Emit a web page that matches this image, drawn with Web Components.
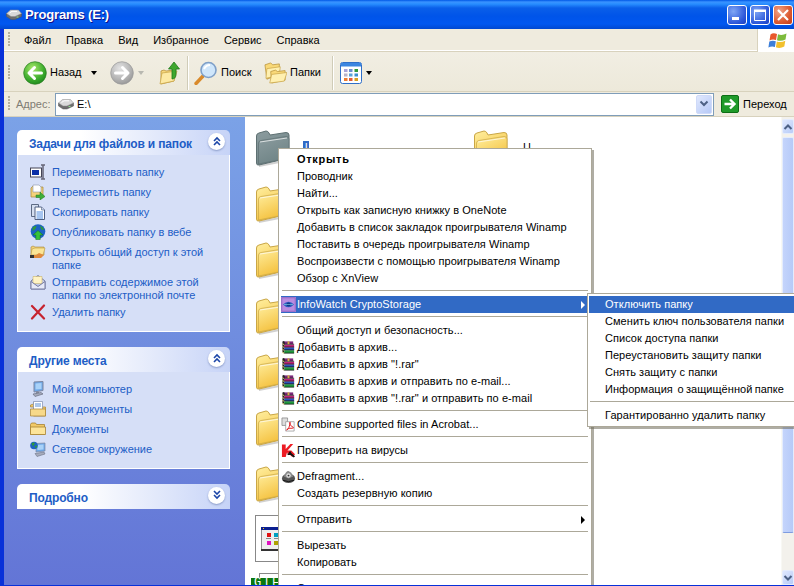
<!DOCTYPE html>
<html lang="ru">
<head>
<meta charset="utf-8">
<title>Programs (E:)</title>
<style>
  html, body { margin: 0; padding: 0; height: 586px; overflow: hidden; background: #fff; }
  body { font-family: "Liberation Sans", "DejaVu Sans", sans-serif; font-size: 11px; color: #000; }
</style>
</head>
<body>
<xp-window>
  <xp-titlebar slot="bars" label="Programs (E:)"></xp-titlebar>
  <xp-menubar slot="bars">
    <span>Файл</span><span>Правка</span><span>Вид</span><span>Избранное</span><span>Сервис</span><span>Справка</span>
  </xp-menubar>
  <xp-toolbar slot="bars">
    <xp-toolbtn icon="back" size="24" label="Назад" arrow style="width:75px"></xp-toolbtn>
    <xp-toolbtn icon="forward" size="24" arrow dim style="width:38px;margin-left:12px"></xp-toolbtn>
    <xp-toolbtn icon="up" size="24" style="margin-left:10px;width:29px"></xp-toolbtn>
    <xp-toolsep></xp-toolsep>
    <xp-toolbtn icon="search" size="24" label="Поиск" style="margin-left:6px;width:70px"></xp-toolbtn>
    <xp-toolbtn icon="folders" size="23" label="Папки" style="width:68px"></xp-toolbtn>
    <xp-toolsep></xp-toolsep>
    <xp-toolbtn icon="views" size="22" arrow style="margin-left:7px"></xp-toolbtn>
  </xp-toolbar>
  <xp-addressbar slot="bars" path="E:\"></xp-addressbar>

  <xp-sidebar slot="side">
    <xp-panel heading="Задачи для файлов и папок">
      <xp-task icon="rename">Переименовать папку</xp-task>
      <xp-task icon="move">Переместить папку</xp-task>
      <xp-task icon="copy">Скопировать папку</xp-task>
      <xp-task icon="publish">Опубликовать папку в вебе</xp-task>
      <xp-task icon="share">Открыть общий доступ к этой папке</xp-task>
      <xp-task icon="mail">Отправить содержимое этой папки по электронной почте</xp-task>
      <xp-task icon="del">Удалить папку</xp-task>
    </xp-panel>
    <xp-panel heading="Другие места">
      <xp-task icon="computer">Мой компьютер</xp-task>
      <xp-task icon="mydocs">Мои документы</xp-task>
      <xp-task icon="smallfolder">Документы</xp-task>
      <xp-task icon="network">Сетевое окружение</xp-task>
    </xp-panel>
    <xp-panel heading="Подробно" collapsed></xp-panel>
  </xp-sidebar>

  <xp-filelist slot="main">
    <xp-file icon="folder-sel" selected>l</xp-file>
    <xp-file icon="folder" style="grid-column:2;grid-row:1">Ц</xp-file>
    <xp-file icon="folder"></xp-file>
    <xp-file icon="folder"></xp-file>
    <xp-file icon="folder"></xp-file>
    <xp-file icon="folder"></xp-file>
    <xp-file icon="folder"></xp-file>
    <xp-file icon="folder"></xp-file>
    <xp-thumb></xp-thumb>
    <xp-gtf>GTF</xp-gtf>
  </xp-filelist>
  <xp-scrollbar slot="scroll"></xp-scrollbar>

  <xp-menu slot="overlay" style="left:274px;top:31px;width:314px">
    <xp-item bold>Открыть</xp-item>
    <xp-item>Проводник</xp-item>
    <xp-item>Найти...</xp-item>
    <xp-item>Открыть как записную книжку в OneNote</xp-item>
    <xp-item>Добавить в список закладок проигрывателя Winamp</xp-item>
    <xp-item>Поставить в очередь проигрывателя Winamp</xp-item>
    <xp-item>Воспроизвести с помощью проигрывателя Winamp</xp-item>
    <xp-item>Обзор с XnView</xp-item>
    <xp-sep></xp-sep>
    <xp-item icon="infowatch" active sub>InfoWatch CryptoStorage</xp-item>
    <xp-sep></xp-sep>
    <xp-item>Общий доступ и безопасность...</xp-item>
    <xp-item icon="rar">Добавить в архив...</xp-item>
    <xp-item icon="rar">Добавить в архив "!.rar"</xp-item>
    <xp-item icon="rar">Добавить в архив и отправить по e-mail...</xp-item>
    <xp-item icon="rar">Добавить в архив "!.rar" и отправить по e-mail</xp-item>
    <xp-sep></xp-sep>
    <xp-item icon="acrobat">Combine supported files in Acrobat...</xp-item>
    <xp-sep></xp-sep>
    <xp-item icon="kav">Проверить на вирусы</xp-item>
    <xp-sep></xp-sep>
    <xp-item icon="defrag">Defragment...</xp-item>
    <xp-item>Создать резервную копию</xp-item>
    <xp-sep></xp-sep>
    <xp-item sub>Отправить</xp-item>
    <xp-sep></xp-sep>
    <xp-item>Вырезать</xp-item>
    <xp-item>Копировать</xp-item>
    <xp-sep></xp-sep>
    <xp-item>Создать ярлык</xp-item>
  </xp-menu>

  <xp-menu slot="overlay" style="left:583px;top:176px;width:230px;padding-left:1px">
    <xp-item active>Отключить папку</xp-item>
    <xp-item>Сменить ключ пользователя папки</xp-item>
    <xp-item>Список доступа папки</xp-item>
    <xp-item>Переустановить защиту папки</xp-item>
    <xp-item>Снять защиту с папки</xp-item>
    <xp-item style="word-spacing:-.8px">Информация&nbsp; о защищённой папке</xp-item>
    <xp-sep></xp-sep>
    <xp-item>Гарантированно удалить папку</xp-item>
  </xp-menu>
</xp-window>

<script>
const UI_FONT = '"Liberation Sans", "DejaVu Sans", sans-serif';

// folder drawing, shared by the grey (selected) and yellow variants
function folderSvg(id, top, bottom, line) {
  return `<svg viewBox="0 0 36 38"><defs><linearGradient id="${id}" x1="0" y1="0" x2=".5" y2="1"><stop offset="0" stop-color="${top}"/><stop offset="1" stop-color="${bottom}"/></linearGradient></defs>
    <path d="M4 37 L35 31 L35 29 L4 35Z" fill="#999" opacity=".45"/>
    <path d="M1.5 6 Q1.5 3.5 4 3 L11 1 Q13 1 14 3 L15 5 L31 2.5 Q34 2.5 34 5 V28 L4 35 Q1.5 35.5 1.5 33Z" fill="url(#${id})" stroke="${line}"/>
    <path d="M3.5 34 V13 Q3.5 11 6 10.500 L31 6.500 Q34 6.500 34 9 V28 Z" fill="url(#${id})" stroke="${line}" stroke-width=".7"/>
    <path d="M5 12 L32 8" stroke="#fff" opacity=".7"/></svg>`;
}

const ICONS = {
  'folder': folderSvg('fy', '#ffefa0', '#f4bf3a', '#c9a646'),
  'folder-sel': folderSvg('fg', '#8c9c9f', '#6f8486', '#5e7072'),
  back: `<svg viewBox="0 0 24 24"><defs><radialGradient id="gb" cx=".4" cy=".3" r=".8"><stop offset="0" stop-color="#a8e86a"/><stop offset=".6" stop-color="#3fae2e"/><stop offset="1" stop-color="#16801a"/></radialGradient></defs><circle cx="12" cy="12" r="11.300" fill="url(#gb)" stroke="#2a7d20" stroke-width=".7"/><path d="M18.500 12H7M11.500 6.500L6 12l5.500 5.500" fill="none" stroke="#fff" stroke-width="3" stroke-linecap="round" stroke-linejoin="round"/></svg>`,
  forward: `<svg viewBox="0 0 24 24"><defs><radialGradient id="gf" cx=".4" cy=".3" r=".8"><stop offset="0" stop-color="#e4e4e4"/><stop offset=".6" stop-color="#b4b4b4"/><stop offset="1" stop-color="#8f8f8f"/></radialGradient></defs><circle cx="12" cy="12" r="11.300" fill="url(#gf)" stroke="#989898" stroke-width=".7"/><path d="M5.500 12H17M12.500 6.500L18 12l-5.500 5.500" fill="none" stroke="#fff" stroke-width="3" stroke-linecap="round" stroke-linejoin="round"/></svg>`,
  up: `<svg viewBox="0 0 24 24"><path d="M3 10l3-1 2 1 8-1v11L3 23 Z" fill="#f7d77c" stroke="#b8923c" stroke-width=".8"/><path d="M2 23l2-11 15-2-3 10z" fill="#fde9a3" stroke="#c7a244" stroke-width=".7"/><path d="M14 18V8h-3.500L16 1l5.500 7H18v5q0 5-4 5z" fill="#3fa72f" stroke="#1f7a1d" stroke-width=".8"/></svg>`,
  search: `<svg viewBox="0 0 24 24"><path d="M2 22.500L9 15" stroke="#d98a2b" stroke-width="3.400" stroke-linecap="round"/><circle cx="14.500" cy="9" r="7.500" fill="#cfe6fb" stroke="#7e9fc8" stroke-width="1.600"/><path d="M10 8q2-4 6-4" stroke="#fff" stroke-width="2" fill="none"/></svg>`,
  folders: `<svg viewBox="0 0 24 24"><path d="M1 4l6-2 2 2 7-1v11L3 19z" fill="#f9d978" stroke="#b8923c" stroke-width=".8"/><path d="M2 18l1-10 14-2-1 9z" fill="#fff0b0" stroke="#c7a244" stroke-width=".7"/><path d="M7 11l5-1.500 2 1.500 8-1v10L8 23z" fill="#f9d978" stroke="#b8923c" stroke-width=".8"/><path d="M6 23l2-9 16-2-3 9z" fill="#fff0b0" stroke="#c7a244" stroke-width=".7"/></svg>`,
  views: `<svg viewBox="0 0 22 22"><rect x=".5" y=".5" width="21" height="21" rx="2" fill="#fff" stroke="#2f6fc8"/><rect x="1" y="1" width="20" height="3.500" fill="#3b86e0"/><g><rect x="4" y="7" width="3.500" height="3" fill="#a9a4d8"/><rect x="9" y="7" width="3.500" height="3" fill="#6b8fd0"/><rect x="14.500" y="7" width="3.500" height="3" fill="#2f9a3a"/><rect x="4" y="11.500" width="3.500" height="3" fill="#b9b4c8"/><rect x="9" y="11.500" width="3.500" height="3" fill="#5aa3d8"/><rect x="14.500" y="11.500" width="3.500" height="3" fill="#3a8fd0"/><rect x="4" y="16" width="3.500" height="3" fill="#ef7d31"/><rect x="9" y="16" width="3.500" height="3" fill="#e05b3a"/><rect x="14.500" y="16" width="3.500" height="3" fill="#d8a020"/></g></svg>`,
  drive: `<svg viewBox="0 0 16 12"><path d="M.5 5V8L5 11H9L15.500 8V5Z" fill="#6d6d6d" stroke="#555" stroke-width=".5"/><path d="M.5 5L4.500 1.500h8L15.500 5 9 8H5z" fill="#d9d9d9" stroke="#8a8a8a" stroke-width=".5"/><path d="M3.500 4.500L6 2.800h5" fill="none" stroke="#fff"/><rect x="10.500" y="8" width="2" height="1" fill="#8fe08f"/></svg>`,
  go: `<svg viewBox="0 0 18 18"><rect x=".5" y=".5" width="17" height="17" rx="1.500" fill="#1f9a2a" stroke="#0d6e16"/><path d="M3.500 9H13M9 4.500L13.500 9 9 13.500" fill="none" stroke="#fff" stroke-width="2.400"/></svg>`,
  flag: `<svg viewBox="0 0 20 18"><path d="M2.500 2.500Q5 .500 9 2L8 8Q4.500 6.800 1.500 8.500z" fill="#e8582c"/><path d="M10 2.300Q14 4 18.500 1.500L17.500 7.500Q13 9.800 9 8.200z" fill="#7dbb3c"/><path d="M1.300 9.500Q4.500 8 7.800 9.200L6.900 15Q3.500 14 .4 15.500z" fill="#3d7fd9"/><path d="M8.800 9.400Q13 11 17.300 8.700L16.300 14.500Q12 17 7.900 15.300z" fill="#f2c02c"/></svg>`,
  rename: `<svg viewBox="0 0 16 16"><rect x=".5" y="4" width="11" height="9" fill="#fff" stroke="#445"/><rect x="2" y="6" width="7" height="5" fill="#0a2fa8"/><path d="M11 1h4M11 15h4M13 1v14" stroke="#667" stroke-width="1.500"/></svg>`,
  move: `<svg viewBox="0 0 16 16"><path d="M1 4l2-2h3l1 1h6v10H1z" fill="#f3d27a" stroke="#a88836" stroke-width=".7"/><path d="M3 1h6l2 2v5H3z" fill="#fff" stroke="#8a93a8" stroke-width=".6"/><path d="M6 11h4V8l5 4.500-5 3.500v-2.500H6z" fill="#3fae38" stroke="#1c7a20" stroke-width=".5"/></svg>`,
  copy: `<svg viewBox="0 0 16 16"><path d="M1.500 .500h7v12h-7z" fill="#d5deef" stroke="#5d6a84"/><path d="M5 3h6.500l3 3v9.500H5z" fill="#fff" stroke="#4f5f80"/><path d="M11.500 3v3h3" fill="#c8d4ea" stroke="#4f5f80" stroke-width=".6"/><path d="M6.500 8h6.500M6.500 10h6.500M6.500 12h6.500M6.500 14h6.500" stroke="#4f8be0"/></svg>`,
  publish: `<svg viewBox="0 0 16 16"><circle cx="8" cy="7.500" r="7.300" fill="#1d63c4"/><path d="M2.500 3.500q2-2 4-1.500l-1 3-3 2zM10 1.500q3.500 1.500 4.300 4.500l-3-.5z" fill="#2f9a3a"/><path d="M8 6.500l5 4.500h-2.800v4.500H5.800V11H3z" fill="#35c23a" stroke="#0f6e1a" stroke-width=".5"/></svg>`,
  share: `<svg viewBox="0 0 16 16"><path d="M1 3l2-1 2 1h9v8H1z" fill="#f3d27a" stroke="#a88836" stroke-width=".6"/><path d="M2 5l3-1h10l-2 7H1z" fill="#fbe596" stroke="#b89a44" stroke-width=".6"/><path d="M1 11h5l3-2 5 2-3 3H3l-2-1z" fill="#e08a3c"/><rect x="0" y="11" width="4" height="3" fill="#333"/></svg>`,
  mail: `<svg viewBox="0 0 16 16"><path d="M1 7L8 1.500 15 7v8H1z" fill="#c9cfe8" stroke="#767ca2"/><path d="M3 2.500h9v7H3z" fill="#fff3c4" stroke="#c4ab58" stroke-width=".5"/><path d="M1 7.500l7 5 7-5V15H1z" fill="#e6e9f8" stroke="#767ca2"/></svg>`,
  del: `<svg viewBox="0 0 16 16"><path d="M2 2l12 12.500M14 1.500L2 14.500" stroke="#c6232f" stroke-width="2.200" stroke-linecap="round"/></svg>`,
  computer: `<svg viewBox="0 0 16 16"><path d="M4 1l9-.5v9L4 11z" fill="#6ea8e8" stroke="#7d86a0"/><path d="M5.500 2.500l6-.4v5.800l-6 .6z" fill="#a9d2f8"/><path d="M6 11l3 0 0 1.500-3 .5z" fill="#8a8fa0"/><path d="M3 13l8-1.500 2 1.500-8 2.500z" fill="#a6abbc" stroke="#5d6274" stroke-width=".6"/></svg>`,
  mydocs: `<svg viewBox="0 0 16 16"><path d="M.5 4l3-1V1h0v14h12V6H.5z" fill="#f1c968" stroke="#a78333" stroke-width=".7"/><path d="M3.500 .500h9v8h-9z" fill="#fff" stroke="#7d8db0" stroke-width=".7"/><path d="M5 3h6M5 5h6" stroke="#5b8fd6"/><path d="M.5 8h15v7H.5z" fill="#f7d98a" stroke="#a78333" stroke-width=".7"/></svg>`,
  smallfolder: `<svg viewBox="0 0 16 16"><path d="M.5 3.500l1-1.500h4l1 1.500h8v10H.5z" fill="#f1c968" stroke="#a78333" stroke-width=".8"/><path d="M.5 6h15v7.500H.5z" fill="#fce49a" stroke="#a78333" stroke-width=".8"/></svg>`,
  network: `<svg viewBox="0 0 16 16"><path d="M6 2.500l9-.5v8l-9 1z" fill="#6ea8e8" stroke="#7d86a0" stroke-width=".7"/><path d="M7.500 4l6-.4v5l-6 .5z" fill="#a9d2f8"/><path d="M5 12.500l9-1.500 1 2-8 2.500z" fill="#a6abbc" stroke="#5d6274" stroke-width=".5"/><circle cx="4" cy="4.500" r="3.800" fill="#1d63c4"/><path d="M1.500 2.500q2-1.500 3.500-.5l-2 3.500zM4.500 5l3-.5-1.500 3z" fill="#2f9a3a"/></svg>`,
  infowatch: `<svg viewBox="0 0 16 16"><rect width="16" height="16" fill="#a77bd6"/><rect x="1" y="1" width="14" height="14" fill="#b98ce0" stroke="#7f55b0" stroke-width=".5"/><path d="M2 8q6-6 12 0-6 6-12 0z" fill="#2f5fc0"/><circle cx="8" cy="8" r="2.200" fill="#123a8a"/><path d="M3 8h10" stroke="#7fd0e8" stroke-width=".7"/></svg>`,
  rar: `<svg viewBox="0 0 16 16"><path d="M3 1.500h10v3H3z" fill="#7a2a7a"/><path d="M1.500 1.500l1.500-.5 1 1-.5 12-2-1z" fill="#222"/><path d="M3.500 5h10.500v3H3.500z" fill="#c0247a"/><path d="M3.500 8h10.500v3H3.500z" fill="#2c55c0"/><path d="M3.500 11h10.500v3H3.500z" fill="#1f9a3c"/><path d="M3 4.500h11M3 7.500h11M3 10.500h11M3 14h11" stroke="#111" stroke-width=".8"/><path d="M1.500 4l2 1M1.500 7l2 1M1.500 10l2 1M1.500 13l2 1" stroke="#e8d070"/><path d="M7 1.500h2v3H7z" fill="#d8b040"/></svg>`,
  acrobat: `<svg viewBox="0 0 16 16"><path d="M1 1h6v8H1z" fill="#ddd" stroke="#777" stroke-width=".7"/><path d="M5 5h9v10H5z" fill="#fff" stroke="#888" stroke-width=".7"/><path d="M6 14q3-2 4-8 0-1-1 0 0 3 4 5 1 1-1 1-4-1-6 2z" fill="none" stroke="#e0181c"/></svg>`,
  kav: `<svg viewBox="0 0 16 16"><path d="M1 1.500h4v5L10 1h3L7 8l-2 7H1z" fill="#ec1c24"/><path d="M5.500 8L11 8l4 4-3 3-3-3-1 1z" fill="#ec1c24"/><path d="M9 9l6 5-1.500 1.500L8 11z" fill="#111"/><path d="M10 9v3H7" fill="none" stroke="#111" stroke-width="1.500"/></svg>`,
  defrag: `<svg viewBox="0 0 16 16"><ellipse cx="8" cy="10" rx="7" ry="5" fill="#555"/><path d="M3 8q2-6 5-6l3 2 2 4-5 2z" fill="#8a8a8a"/><circle cx="8" cy="7" r="2.400" fill="#ddd"/><circle cx="8" cy="7" r="1" fill="#333"/><path d="M2 12q6 3 12 0" stroke="#111" fill="none"/></svg>`
};

class XpIcon extends HTMLElement {
  connectedCallback() {
    if (this.shadowRoot) return;
    const size = this.getAttribute('size') || 16;
    const h = this.getAttribute('height') || size;
    this.attachShadow({ mode: 'open' }).innerHTML = `
      <style>
        :host { display: block; flex: none; width: ${size}px; height: ${h}px; }
        svg { display: block; width: 100%; height: 100%; }
      </style>${ICONS[this.getAttribute('name')] || ''}`;
  }
}

// Window shell: blue frame, bars on top, then sidebar / list / scrollbar
class XpWindow extends HTMLElement {
  connectedCallback() {
    if (this.shadowRoot) return;
    this.attachShadow({ mode: 'open' }).innerHTML = `
      <style>
        :host {
          display: flex; flex-direction: column; position: relative;
          width: 794px; height: 586px; box-sizing: border-box; overflow: hidden;
          background: #0831d9; border-bottom: 1px solid #0831d9;
          font-family: ${UI_FONT}; font-size: 11px;
        }
        .bars { display: flex; flex-direction: column; flex: none; }
        .body { display: flex; flex: 1; min-height: 0; margin-left: 4px; position: relative; }
        .overlay { position: absolute; inset: 0 0 0 0; pointer-events: none; }
      </style>
      <div class="bars"><slot name="bars"></slot></div>
      <div class="body">
        <slot name="side"></slot><slot name="main"></slot><slot name="scroll"></slot>
        <div class="overlay"><slot name="overlay"></slot></div>
      </div>`;
  }
}

class XpTitlebar extends HTMLElement {
  connectedCallback() {
    if (this.shadowRoot) return;
    this.attachShadow({ mode: 'open' }).innerHTML = `
      <style>
        :host {
          display: flex; align-items: center; height: 29px; box-sizing: border-box; padding: 0 1px 0 6px;
          background: linear-gradient(180deg, #0058e6 0, #3a93ff 2px, #288eff 4px, #0a5fe9 8px, #0054e9 16px, #0057f0 24px, #0048d0 29px);
        }
        .name {
          margin-left: 3px; flex: 1; color: #fff; font: bold 13px ${UI_FONT}; letter-spacing: -.15px;
          text-shadow: 1px 1px 0 #0f1089;
        }
        .btn {
          width: 20px; height: 20px; margin-left: 3px; box-sizing: border-box; border: 1px solid #fff; border-radius: 3px;
          background: radial-gradient(circle at 30% 30%, #7fa6f5, #2a55d8 70%, #1c3fc0);
          display: flex; align-items: center; justify-content: center;
        }
        .btn.close { background: radial-gradient(circle at 30% 30%, #f0a58a, #dc5a30 60%, #c03a1a); }
        svg { display: block; }
      </style>
      <xp-icon name="drive" size="16" height="13"></xp-icon>
      <span class="name">${this.getAttribute('label')}</span>
      <div class="btn"><svg width="14" height="14"><rect x="2" y="9" width="7" height="3" fill="#fff"/></svg></div>
      <div class="btn"><svg width="14" height="14"><path d="M1.500 3.500h11v9h-11z" fill="none" stroke="#fff"/><rect x="1" y="1.500" width="12" height="2.500" fill="#fff"/></svg></div>
      <div class="btn close"><svg width="14" height="14"><path d="M2 2l10 10M12 2L2 12" stroke="#fff" stroke-width="2.200"/></svg></div>`;
  }
}

const GRIP = `<svg width="3" height="16" style="flex:none;display:block"><g fill="#b5b19c"><rect y="0" width="2" height="2"/><rect y="3" width="2" height="2"/><rect y="6" width="2" height="2"/><rect y="9" width="2" height="2"/><rect y="12" width="2" height="2"/></g></svg>`;

class XpMenubar extends HTMLElement {
  connectedCallback() {
    if (this.shadowRoot) return;
    this.attachShadow({ mode: 'open' }).innerHTML = `
      <style>
        :host {
          display: flex; align-items: center; height: 23px; box-sizing: border-box; margin-left: 4px;
          background: #efebde; border-bottom: 1px solid #d8d2bd; box-shadow: inset 0 -1px 0 #fff; padding-left: 4px;
        }
        .items { display: flex; gap: 15px; margin-left: 13px; flex: 1; }
        ::slotted(span) { line-height: 13px; }
        .logo { width: 37px; height: 23px; margin-top: 1px; background: #fff; border-left: 1px solid #d8d2bd; box-sizing: border-box;
          display: flex; align-items: center; justify-content: center; padding-left: 3px; }
      </style>
      ${GRIP}
      <div class="items"><slot></slot></div>
      <div class="logo"><xp-icon name="flag" size="20" height="18"></xp-icon></div>`;
  }
}

class XpToolbar extends HTMLElement {
  connectedCallback() {
    if (this.shadowRoot) return;
    this.attachShadow({ mode: 'open' }).innerHTML = `
      <style>
        :host {
          display: flex; align-items: center; height: 40px; box-sizing: border-box; margin-left: 4px; padding: 2px 0 0 4px;
          background: linear-gradient(180deg, #f1eee3, #ede9da); border-bottom: 1px solid #d8d2bd;
        }
        .row { display: flex; align-items: center; margin-left: 12px; height: 100%; }
      </style>
      ${GRIP}
      <div class="row"><slot></slot></div>`;
  }
}

class XpToolbtn extends HTMLElement {
  connectedCallback() {
    if (this.shadowRoot) return;
    const label = this.getAttribute('label');
    const arrow = this.hasAttribute('arrow');
    const dim = this.hasAttribute('dim');
    this.attachShadow({ mode: 'open' }).innerHTML = `
      <style>
        :host { display: flex; align-items: center; flex: none; position: relative; }
        .label { margin-left: 3px; line-height: 13px; }
        .arrow { width: 0; height: 0; margin-left: auto; margin-right: 1px; border: 3.500px solid transparent; border-bottom: 0; border-top: 4px solid ${dim ? '#b8b8b0' : '#000'}; }
      </style>
      <xp-icon name="${this.getAttribute('icon')}" size="${this.getAttribute('size')}"></xp-icon>
      ${label ? `<span class="label">${label}</span>` : ''}
      ${arrow ? `<span class="arrow" style="${label ? '' : 'margin-left:4px'}"></span>` : ''}`;
  }
}

class XpToolsep extends HTMLElement {
  connectedCallback() {
    if (this.shadowRoot) return;
    this.attachShadow({ mode: 'open' }).innerHTML = `
      <style>:host { display: block; flex: none; width: 1px; height: 34px; background: #d0ccb8; box-shadow: 1px 0 0 #fff; margin-left: 0; }</style>`;
  }
}

class XpAddressbar extends HTMLElement {
  connectedCallback() {
    if (this.shadowRoot) return;
    this.attachShadow({ mode: 'open' }).innerHTML = `
      <style>
        :host {
          display: flex; align-items: center; height: 25px; box-sizing: border-box; margin-left: 4px; padding-left: 4px;
          background: #efebde; border-bottom: 1px solid #d8d2bd;
        }
        .cap { color: #7f7c73; margin-left: 5px; width: 39px; flex: none; }
        .field { display: flex; align-items: center; flex: none; width: 659px; height: 23px; box-sizing: border-box; background: #fff; border: 1px solid #7f9db9; padding-left: 2px; }
        .path { margin-left: 3px; flex: 1; }
        .drop { width: 16px; height: 19px; margin-right: 1px; border-radius: 2px; background: linear-gradient(135deg, #e0e8fd, #b6c9f7); border: 1px solid #cfdaf8; box-sizing: border-box; display: flex; align-items: center; justify-content: center; }
        .go { margin-left: 7px; }
        .go-text { margin-left: 4px; }
      </style>
      ${GRIP}
      <span class="cap">Адрес:</span>
      <div class="field">
        <xp-icon name="drive" size="16" height="12"></xp-icon>
        <span class="path">${this.getAttribute('path')}</span>
        <div class="drop"><svg width="10" height="8"><path d="M1.500 1.500L5 5l3.500-3.500" fill="none" stroke="#4d6185" stroke-width="2"/></svg></div>
      </div>
      <xp-icon class="go" name="go" size="18"></xp-icon>
      <span class="go-text">Переход</span>`;
  }
}

class XpSidebar extends HTMLElement {
  connectedCallback() {
    if (this.shadowRoot) return;
    this.attachShadow({ mode: 'open' }).innerHTML = `
      <style>
        :host {
          display: flex; flex-direction: column; gap: 15px; flex: none; width: 241px; box-sizing: border-box;
          padding: 13px 15px 0 13px; background: linear-gradient(180deg, #7ba2e7, #6375d6);
        }
      </style>
      <slot></slot>`;
  }
}

class XpPanel extends HTMLElement {
  connectedCallback() {
    if (this.shadowRoot) return;
    const collapsed = this.hasAttribute('collapsed');
    const chev = collapsed ? 'M5 4l3 3 3-3M5 8l3 3 3-3' : 'M5 8l3-3 3 3M5 12l3-3 3 3';
    this.attachShadow({ mode: 'open' }).innerHTML = `
      <style>
        :host { display: block; }
        .head {
          display: flex; align-items: center; height: 25px; padding: 0 5px 0 12px;
          background: linear-gradient(90deg, #fff 30%, #c6d3f7); border-radius: 5px 5px 0 0;
        }
        .title { flex: 1; font: bold 12px ${UI_FONT}; letter-spacing: -.15px; color: #215dc6; padding-top: 2px; }
        .chev { width: 17px; height: 17px; border-radius: 50%; background: #fff; box-shadow: 0 1px 2px #8a9bc8; margin-top: -3px; margin-right: 0; display: flex; align-items: center; justify-content: center; }
        svg { display: block; }
        .body {
          display: flex; flex-direction: column; gap: 4px; padding: 9px 10px 11px 12px;
          background: #d6dff7; border: 1px solid #fff; border-top: 0;
        }
      </style>
      <div class="head">
        <div class="title">${this.getAttribute('heading')}</div>
        <div class="chev"><svg width="16" height="16"><path d="${chev}" fill="none" stroke="#1c46a8" stroke-width="1.600"/></svg></div>
      </div>
      ${collapsed ? '' : '<div class="body"><slot></slot></div>'}`;
  }
}

class XpTask extends HTMLElement {
  connectedCallback() {
    if (this.shadowRoot) return;
    this.attachShadow({ mode: 'open' }).innerHTML = `
      <style>
        :host { display: flex; align-items: flex-start; gap: 6px; min-height: 16px; color: #215dc6; }
        .text { line-height: 13px; margin: 2px 0 -2px; }
      </style>
      <xp-icon name="${this.getAttribute('icon')}"></xp-icon>
      <div class="text"><slot></slot></div>`;
  }
}

class XpFilelist extends HTMLElement {
  connectedCallback() {
    if (this.shadowRoot) return;
    this.attachShadow({ mode: 'open' }).innerHTML = `
      <style>
        :host {
          display: grid; grid-template-columns: 218px 218px; grid-auto-rows: 56px; align-content: start;
          flex: 1; min-width: 0; padding: 13px 0 0 10px; background: #fff; overflow: hidden;
        }
      </style>
      <slot></slot>`;
  }
}

class XpFile extends HTMLElement {
  connectedCallback() {
    if (this.shadowRoot) return;
    const sel = this.hasAttribute('selected');
    this.attachShadow({ mode: 'open' }).innerHTML = `
      <style>
        :host { display: flex; align-items: flex-start; grid-column: 1; }
        .label { margin: 11px 0 0 12px; line-height: 13px; padding: 0 2px; ${sel ? 'background:#316ac5;color:#fff;' : ''} }
      </style>
      <xp-icon name="${this.getAttribute('icon')}" size="36" height="38"></xp-icon>
      <span class="label"><slot></slot></span>`;
  }
}

class XpThumb extends HTMLElement {
  connectedCallback() {
    if (this.shadowRoot) return;
    this.attachShadow({ mode: 'open' }).innerHTML = `
      <style>
        :host { display: flex; align-items: center; grid-column: 1; width: 80px; height: 47px; margin-top: -7px; box-sizing: border-box; border: 1px solid #888; background: #fff; padding-left: 5px; }
        svg { display: block; }
      </style>
      <svg width="40" height="24" viewBox="0 0 40 24">
        <rect width="40" height="23" fill="#eee" stroke="#333"/>
        <rect width="40" height="3" fill="#0a1f8f"/><rect x="2" y="1" width="1" height="1" fill="#fc0"/>
        <rect x="6" y="6" width="4" height="4" fill="#e01010"/><rect x="13" y="6" width="4" height="4" fill="#00a0c0"/>
        <rect x="6" y="14" width="4" height="4" fill="#e010c0"/><rect x="13" y="14" width="4" height="4" fill="#b0a000"/>
        <rect x="5" y="11" width="5" height="1" fill="#888"/><rect x="13" y="11" width="5" height="1" fill="#888"/>
        <rect y="22" width="40" height="2" fill="#333"/>
      </svg>`;
  }
}

class XpGtf extends HTMLElement {
  connectedCallback() {
    if (this.shadowRoot) return;
    this.attachShadow({ mode: 'open' }).innerHTML = `
      <style>
        :host { display: block; position: relative; grid-column: 1; margin: 0 0 0 -4px; height: 12px; width: 60px; background: #fff; }
        .box { position: absolute; left: 8px; top: -5px; width: 60px; height: 8px; border: 1px solid #888; border-bottom: 0; }
        .tag { position: absolute; left: 0; top: 0; width: 57px; height: 13px; background: #0a780f; color: #fff; font: 12px/10px "Liberation Mono", monospace; letter-spacing: 1.800px; padding-left: 3px; }
      </style>
      <div class="box"></div>
      <div class="tag"><slot></slot></div>`;
  }
}

class XpScrollbar extends HTMLElement {
  connectedCallback() {
    if (this.shadowRoot) return;
    this.attachShadow({ mode: 'open' }).innerHTML = `
      <style>
        :host {
          display: flex; flex-direction: column; flex: none; width: 13px; box-sizing: border-box; padding-top: 2px;
          background: #f3f1ec; border-left: 1px solid #f8f8f4;
        }
        .btn { height: 15px; flex: none; background: linear-gradient(135deg, #dfe8fe, #b8ccf8); border: 1px solid #e4ecfd; box-sizing: border-box; border-radius: 2px; display: flex; align-items: center; justify-content: center; }
        .thumb { height: 396px; flex: none; margin-top: 3px; box-sizing: border-box; background: linear-gradient(90deg, #c4d4fb, #b6caf8); border: 1px solid #e4ecfd; border-bottom: 1px solid #7e9ce0; border-radius: 2px; }
        .track { flex: 1; }
        svg { display: block; }
      </style>
      <div class="btn"><svg width="10" height="8"><path d="M1.500 6L5 2.500 8.500 6" fill="none" stroke="#4d6185" stroke-width="2"/></svg></div>
      <div class="thumb"></div>
      <div class="track"></div>
      <div class="btn"><svg width="10" height="8"><path d="M1.500 2L5 5.500 8.500 2" fill="none" stroke="#4d6185" stroke-width="2"/></svg></div>`;
  }
}

class XpMenu extends HTMLElement {
  connectedCallback() {
    if (this.shadowRoot) return;
    this.attachShadow({ mode: 'open' }).innerHTML = `
      <style>
        :host {
          display: block; position: absolute; box-sizing: border-box; padding: 2px;
          background: #fff; border: 1px solid #aca899; box-shadow: 2px 2px 0 rgba(110,105,90,.55);
          pointer-events: auto;
        }
      </style>
      <slot></slot>`;
  }
}

class XpItem extends HTMLElement {
  connectedCallback() {
    if (this.shadowRoot) return;
    const icon = this.getAttribute('icon');
    const on = this.hasAttribute('active');
    const bold = this.hasAttribute('bold');
    this.attachShadow({ mode: 'open' }).innerHTML = `
      <style>
        :host {
          display: flex; align-items: center; height: 17px; white-space: nowrap; letter-spacing: ${bold ? '.7px' : '.05px'};
          ${on ? 'background:#316ac5;color:#fff;' : ''}
          ${bold ? 'font-weight:bold;' : ''}
        }
        .ic { width: 16px; flex: none; }
        .text { flex: 1; line-height: 13px; }
        .arrow { width: 0; height: 0; margin-right: 4px; border: 4px solid transparent; border-right: 0; border-left: 4px solid ${on ? '#fff' : '#000'}; }
      </style>
      <div class="ic">${icon ? `<xp-icon name="${icon}" size="15"></xp-icon>` : ''}</div>
      <div class="text"><slot></slot></div>
      ${this.hasAttribute('sub') ? '<span class="arrow"></span>' : ''}`;
  }
}

class XpSep extends HTMLElement {
  connectedCallback() {
    if (this.shadowRoot) return;
    this.attachShadow({ mode: 'open' }).innerHTML = `
      <style>
        :host { display: block; height: 9px; box-sizing: border-box; padding: 3px 1px 0; }
        div { height: 1px; background: #aca899; }
      </style>
      <div></div>`;
  }
}

customElements.define('xp-icon', XpIcon);
customElements.define('xp-window', XpWindow);
customElements.define('xp-titlebar', XpTitlebar);
customElements.define('xp-menubar', XpMenubar);
customElements.define('xp-toolbar', XpToolbar);
customElements.define('xp-toolbtn', XpToolbtn);
customElements.define('xp-toolsep', XpToolsep);
customElements.define('xp-addressbar', XpAddressbar);
customElements.define('xp-sidebar', XpSidebar);
customElements.define('xp-panel', XpPanel);
customElements.define('xp-task', XpTask);
customElements.define('xp-filelist', XpFilelist);
customElements.define('xp-file', XpFile);
customElements.define('xp-thumb', XpThumb);
customElements.define('xp-gtf', XpGtf);
customElements.define('xp-scrollbar', XpScrollbar);
customElements.define('xp-menu', XpMenu);
customElements.define('xp-item', XpItem);
customElements.define('xp-sep', XpSep);
</script>
</body>
</html>
